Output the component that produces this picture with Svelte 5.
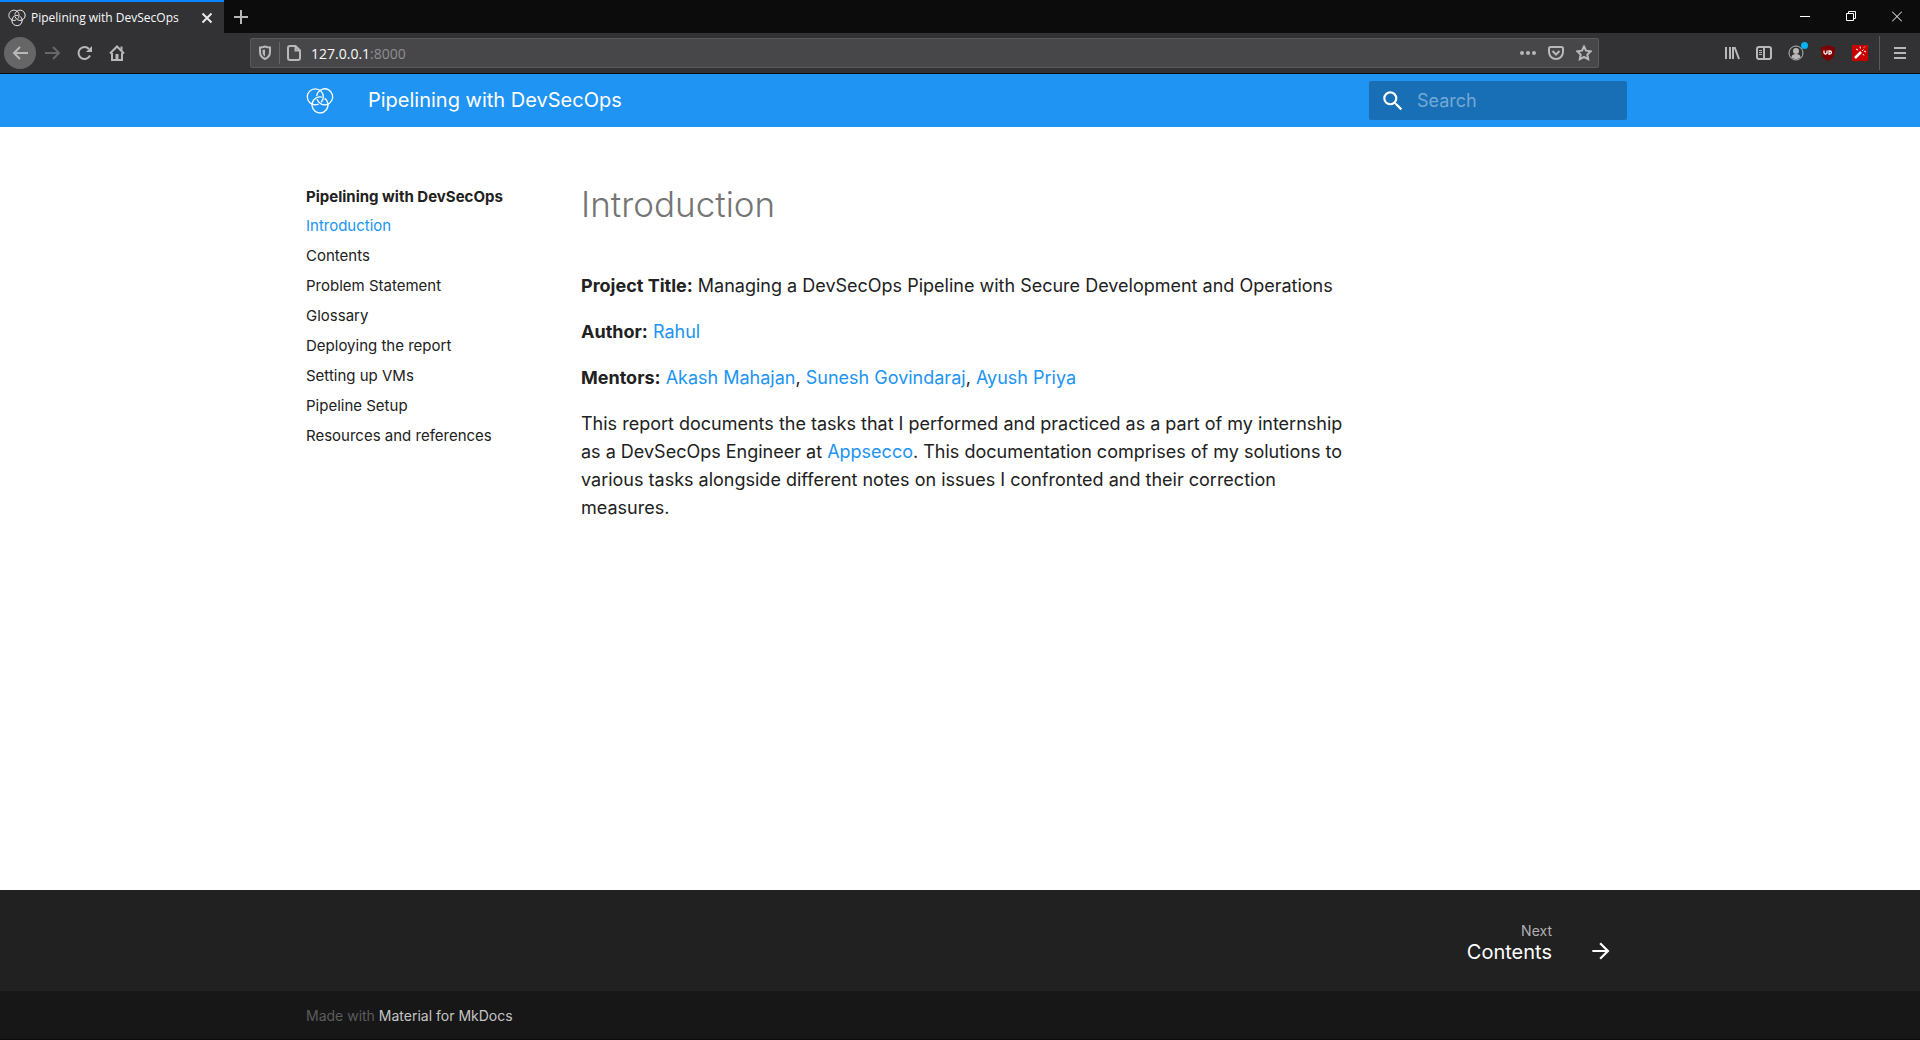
<script>
  const pages = [
    'Introduction',
    'Contents',
    'Problem Statement',
    'Glossary',
    'Deploying the report',
    'Setting up VMs',
    'Pipeline Setup',
    'Resources and references',
  ];
  let current = $state('Introduction');
  let query = $state('');
</script>

{#snippet rings(size)}
  <svg class="rings" width={size} height={size} viewBox="0 0 28 28" aria-hidden="true">
    <circle cx="9.3" cy="9.8" r="8" pathLength="100" stroke-dasharray="12 6 82 0" />
    <circle cx="9.3" cy="9.8" r="8" pathLength="100" stroke-dasharray="12 6 82 0" transform="rotate(120 14 12.500)" />
    <circle cx="9.3" cy="9.8" r="8" pathLength="100" stroke-dasharray="12 6 82 0" transform="rotate(240 14 12.500)" />
  </svg>
{/snippet}

<div class="window">
  <div class="tabbar">
    <div class="tab">
      {@render rings(18)}
      <span class="tab-title">Pipelining with DevSecOps</span>
      <button class="plain close-tab" aria-label="Close tab">
        <svg width="12" height="12" viewBox="0 0 12 12"><path d="M1.5 1.5l9 9M10.5 1.5l-9 9" stroke="#e8e8e9" stroke-width="2" /></svg>
      </button>
    </div>
    <button class="plain new-tab" aria-label="New tab">
      <svg width="14" height="14" viewBox="0 0 14 14"><path d="M7 0v14M0 7h14" stroke="#b8b8b9" stroke-width="2" /></svg>
    </button>
    <div class="controls">
      <button class="plain" aria-label="Minimize">
        <svg width="10" height="11" viewBox="0 0 10 11"><path d="M0 5.5h10" stroke="#fff" /></svg>
      </button>
      <button class="plain" aria-label="Restore">
        <svg width="10" height="11" viewBox="0 0 10 11" fill="none" stroke="#fff"><path d="M.5 2.5h7v7h-7zM2.500 2.500v-2h7v7h-2" /></svg>
      </button>
      <button class="plain" aria-label="Close">
        <svg width="10" height="11" viewBox="0 0 10 11"><path d="M0 .5l10 10M10 .5l-10 10" stroke="#fff" /></svg>
      </button>
    </div>
  </div>

  <div class="toolbar">
    <div class="nav-buttons">
      <button class="plain back" aria-label="Back">
        <svg width="18" height="16" viewBox="0 0 18 16"><path d="M17 8H3M9 2L3 8l6 6" /></svg>
      </button>
      <button class="plain dim" aria-label="Forward">
        <svg width="18" height="16" viewBox="0 0 18 16"><path d="M1 8h14M9 2l6 6-6 6" /></svg>
      </button>
      <button class="plain" aria-label="Reload">
        <svg width="16" height="16" viewBox="0 0 16 16"><path d="M13 10.500A6 6 0 1 1 12 4" /><path class="solid" d="M15 1v6H9z" /></svg>
      </button>
      <button class="plain" aria-label="Home">
        <svg width="16" height="16" viewBox="0 0 16 16"><path d="M1 8.500L8 1.500l7 7M3 8v7h10V8" /><path class="solid" d="M7 9h2.500v6H6.500V9zM11.500 1.500h2V6l-2-2z" /></svg>
      </button>
    </div>
    <div class="urlbar">
      <button class="plain" aria-label="Tracking protection">
        <svg width="14" height="16" viewBox="0 0 14 16"><path d="M7 1.500c2 .8 3.500 1 5 1V7c0 3-1.500 5.500-5 7-3.500-1.500-5-4-5-7V2.500c1.500 0 3-.2 5-1z" /><path class="solid" d="M7 4.500v7C5.500 10.500 4.500 9 4.500 7V5z" /></svg>
      </button>
      <span class="url-rule"></span>
      <svg class="page" width="14" height="16" viewBox="0 0 14 16"><path d="M8.500 1H3a2 2 0 0 0-2 2v10a2 2 0 0 0 2 2h8a2 2 0 0 0 2-2V5.500zV5.500H13" /></svg>
      <span class="address">127.0.0.1<span>:8000</span></span>
      <div class="url-actions">
        <button class="plain" aria-label="Page actions">
          <svg width="16" height="16" viewBox="0 0 16 16"><g class="solid"><circle cx="2" cy="8" r="2" /><circle cx="8" cy="8" r="2" /><circle cx="14" cy="8" r="2" /></g></svg>
        </button>
        <button class="plain" aria-label="Save to Pocket">
          <svg width="16" height="16" viewBox="0 0 16 16"><path d="M2.500 2h11A1.500 1.500 0 0 1 15 3.500V7A7 7 0 0 1 1 7V3.500A1.500 1.500 0 0 1 2.500 2zM4.500 6L8 9.500 11.500 6" /></svg>
        </button>
        <button class="plain" aria-label="Bookmark this page">
          <svg width="16" height="16" viewBox="0 0 16 16"><path d="M8 1.500l2 4.200 4.700.6-3.400 3.200.9 4.700L8 12l-4.200 2.200.9-4.700L1.300 6.300 6 5.700z" /></svg>
        </button>
      </div>
    </div>
    <div class="extensions">
      <button class="plain" aria-label="Library">
        <svg width="16" height="16" viewBox="0 0 16 16"><path d="M2 2v12M6 2v12M9 2v12M10.500 2l4.500 12" /></svg>
      </button>
      <button class="plain" aria-label="Sidebars">
        <svg width="16" height="16" viewBox="0 0 16 16"><rect x="1" y="2" width="14" height="12" rx="2" /><path d="M8 2v12" /><path class="thin" d="M3 5.500h3M3 7.500h3M3 9.500h3" /></svg>
      </button>
      <button class="plain account" aria-label="Account">
        <svg width="16" height="16" viewBox="0 0 16 16"><circle class="thin" cx="8" cy="8" r="7" /><circle class="solid" cx="8" cy="6" r="3" /><path class="solid" d="M3.500 12c0-4 9-4 9 0-2 2.700-7 2.700-9 0z" /></svg>
        <span class="badge"></span>
      </button>
      <button class="plain shield" aria-label="Ad blocker">
        <svg width="16" height="16" viewBox="0 0 16 16"><path d="M8 0c2.500 1.600 4 2 7 2 0 7-.5 10.500-7 14C1.500 12.500 1 9 1 2c3 0 4.500-.4 7-2z" fill="#800000" stroke="none" /><path d="M4 5.500v2c0 2 3 2 3 0v-2M9 6h.8c2.200 0 2.200 3 0 3H9z" stroke="#fff" stroke-width="1.300" /></svg>
      </button>
      <button class="plain" aria-label="Magic wand">
        <svg width="16" height="16" viewBox="0 0 16 16"><path fill="#c80000" stroke="none" d="M0 0h16v16H0z" /><path d="M3 13l6-6" stroke="#fff" stroke-width="2.500" /><path d="M10 6l1.500-1.500M4 4l2 1M8 1.500l.5 2M12 2.500l1-1M12 6l2 1M11 9l1 1.500" stroke="#fff" stroke-width="1" /></svg>
      </button>
      <span class="menu-rule"></span>
      <button class="plain" aria-label="Menu">
        <svg width="14" height="14" viewBox="0 0 14 14"><path d="M1 2h12M1 7h12M1 12h12" /></svg>
      </button>
    </div>
  </div>

  <header>
    <div class="grid header-inner">
      <a class="logo" href="#home" aria-label="Home page">{@render rings(28)}</a>
      <span class="site-title">Pipelining with DevSecOps</span>
      <label class="search">
        <svg width="26" height="26" viewBox="0 0 24 24" fill="#fff" aria-hidden="true"><path d="M9.500 3A6.500 6.500 0 0 1 16 9.500c0 1.610-.59 3.090-1.560 4.230l.27.27h.79l5 5-1.500 1.500-5-5v-.79l-.27-.27A6.516 6.516 0 0 1 9.500 16 6.500 6.500 0 0 1 3 9.500 6.500 6.500 0 0 1 9.500 3m0 2C7 5 5 7 5 9.500S7 14 9.500 14 14 12 14 9.500 12 5 9.500 5z" /></svg>
        <input type="text" placeholder="Search" aria-label="Search" bind:value={query} />
      </label>
    </div>
  </header>

  <main class="grid">
    <nav aria-label="Site">
      <strong>Pipelining with DevSecOps</strong>
      <ul>
        {#each pages as page}
          <li><a href="#{page}" class:active={page === current} onclick={() => (current = page)}>{page}</a></li>
        {/each}
      </ul>
    </nav>
    <article>
      <h1>Introduction</h1>
      <p><strong>Project Title:</strong> Managing a DevSecOps Pipeline with Secure Development and Operations</p>
      <p><strong>Author:</strong> <a href="#rahul">Rahul</a></p>
      <p><strong>Mentors:</strong> <a href="#akash">Akash Mahajan</a>, <a href="#sunesh">Sunesh Govindaraj</a>, <a href="#ayush">Ayush Priya</a></p>
      <p>This report documents the tasks that I performed and practiced as a part of my internship as a DevSecOps Engineer at <a href="#appsecco">Appsecco</a>. This documentation comprises of my solutions to various tasks alongside different notes on issues I confronted and their correction measures.</p>
    </article>
  </main>

  <footer>
    <div class="grid next-row">
      <a class="next" href="#Contents">
        <span class="next-text"><small>Next</small>Contents</span>
        <svg width="26" height="26" viewBox="0 0 24 24" fill="#fff" aria-hidden="true"><path d="M4 11v2h12l-5.500 5.500 1.420 1.420L19.840 12l-7.920-7.920L10.500 5.500 16 11H4z" /></svg>
      </a>
    </div>
    <div class="meta">
      <div class="grid meta-inner">Made with <a href="#mkdocs">Material for MkDocs</a></div>
    </div>
  </footer>
</div>

<style>
  :global(body) {
    margin: 0;
    background: #fff;
  }
  .window {
    min-height: 100vh;
    display: flex;
    flex-direction: column;
    box-sizing: border-box;
    border-bottom: 1px solid #0c0c0d;
    font-family: Inter, "Liberation Sans", sans-serif;
    color: #212121;
  }
  a {
    color: #2094f3;
    text-decoration: none;
  }
  .plain {
    display: flex;
    align-items: center;
    justify-content: center;
    position: relative;
    padding: 0;
    border: 0;
    background: none;
  }
  .rings {
    fill: none;
    stroke: #fff;
    stroke-width: 1.3;
    flex: none;
  }

  /* browser chrome */
  .tabbar {
    display: flex;
    height: 33px;
    background: #0c0c0d;
    font-family: "Open Sans", "Noto Sans", sans-serif;
  }
  .tab {
    display: flex;
    align-items: center;
    box-sizing: border-box;
    width: 224px;
    padding: 0 11px 0 8px;
    border-top: 2px solid #0a84ff;
    background: #323234;
    color: #f9f9fa;
    font-size: 12px;
  }
  .tab-title {
    flex: 1;
    margin-left: 5px;
    white-space: nowrap;
  }
  .new-tab {
    width: 34px;
  }
  .controls {
    display: flex;
    margin-left: auto;
  }
  .controls button {
    width: 46px;
  }
  .toolbar {
    display: flex;
    align-items: center;
    box-sizing: border-box;
    height: 41px;
    padding: 0 4px;
    border-bottom: 1px solid #0c0c0d;
    background: #323234;
    font-family: "Open Sans", "Noto Sans", sans-serif;
  }
  .toolbar svg {
    fill: none;
    stroke: #b8b8b9;
    stroke-width: 2;
  }
  .toolbar .solid {
    fill: #b8b8b9;
    stroke: none;
  }
  .toolbar .thin {
    stroke-width: 1;
  }
  .toolbar .plain {
    width: 32px;
    height: 32px;
  }
  .nav-buttons {
    display: flex;
    width: 246px;
  }
  .toolbar .back {
    margin-right: 1px;
    border-radius: 50%;
    background: #666667;
  }
  .dim {
    opacity: 0.4;
  }
  .urlbar {
    flex: 1;
    display: flex;
    align-items: center;
    box-sizing: border-box;
    height: 30px;
    border: 1px solid #5a5a5c;
    border-radius: 2px;
    background: #474749;
    color: #a0a0a1;
    font-size: 14px;
  }
  .urlbar .plain {
    width: 28px;
    height: 28px;
  }
  .url-rule {
    width: 1px;
    height: 22px;
    margin-right: 7px;
    background: #66666a;
  }
  .address {
    margin-left: 10px;
    color: #f9f9fa;
  }
  .address span {
    color: #8f8f91;
  }
  .url-actions {
    display: flex;
    margin-left: auto;
  }
  .extensions {
    display: flex;
    align-items: center;
    margin-left: 117px;
  }
  .badge {
    position: absolute;
    top: 5px;
    right: 4px;
    width: 7px;
    height: 7px;
    border-radius: 50%;
    background: #00b3f4;
  }
  .menu-rule {
    width: 1px;
    height: 34px;
    margin: 0 4px 0 3px;
    background: #5a5a5c;
  }

  /* page */
  .grid {
    box-sizing: border-box;
    width: 100%;
    max-width: 1342px;
    margin: 0 auto;
  }
  header {
    background: #2094f3;
    color: #fff;
  }
  .header-inner {
    display: flex;
    align-items: center;
    height: 53px;
    padding: 0 4px 0 17px;
  }
  .logo {
    display: flex;
  }
  .site-title {
    margin-left: 34px;
    padding-bottom: 2px;
    font-size: 20px;
  }
  .search {
    display: flex;
    align-items: center;
    box-sizing: border-box;
    width: 258px;
    height: 39px;
    margin-left: auto;
    padding: 0 11px;
    border-radius: 2px;
    background: #186fb6;
  }
  .search input {
    flex: 1;
    min-width: 0;
    margin-left: 11px;
    padding: 0;
    border: 0;
    outline: 0;
    background: none;
    color: #fff;
    font: 18px Inter, sans-serif;
  }
  .search input::placeholder {
    color: #74a9d3;
    opacity: 1;
  }
  main {
    flex: 1;
    display: flex;
    padding: 55px 17px 0;
  }
  nav {
    width: 275px;
    flex: none;
    padding-top: 5px;
    font-size: 15px;
    line-height: 20px;
  }
  ul {
    margin: 9px 0 0;
    padding: 0;
    list-style: none;
  }
  li + li {
    margin-top: 10px;
  }
  li a {
    color: #212121;
  }
  li a.active {
    color: #2094f3;
  }
  article {
    max-width: 764px;
    font-size: 18px;
    line-height: 28px;
  }
  h1 {
    margin: 0 0 46px;
    color: #757575;
    font-size: 35px;
    font-weight: 300;
    line-height: 44px;
  }
  p {
    margin: 0 0 18px;
  }
  footer {
    background: #212121;
    color: #fff;
  }
  .next-row {
    display: flex;
    justify-content: flex-end;
    height: 101px;
    padding: 0 17px 27px;
  }
  .next {
    display: flex;
    align-items: flex-end;
    color: #fff;
    font-size: 20px;
    line-height: 24px;
  }
  .next-text {
    margin-right: 36px;
    text-align: right;
  }
  small {
    display: block;
    color: #b0b0b0;
    font-size: 14px;
    line-height: 18px;
  }
  .meta {
    background: #171717;
  }
  .meta-inner {
    padding: 15px 17px 14px;
    color: #5c5c5c;
    font-size: 14px;
    line-height: 19px;
  }
  .meta a {
    color: #c5c5c5;
  }
</style>
